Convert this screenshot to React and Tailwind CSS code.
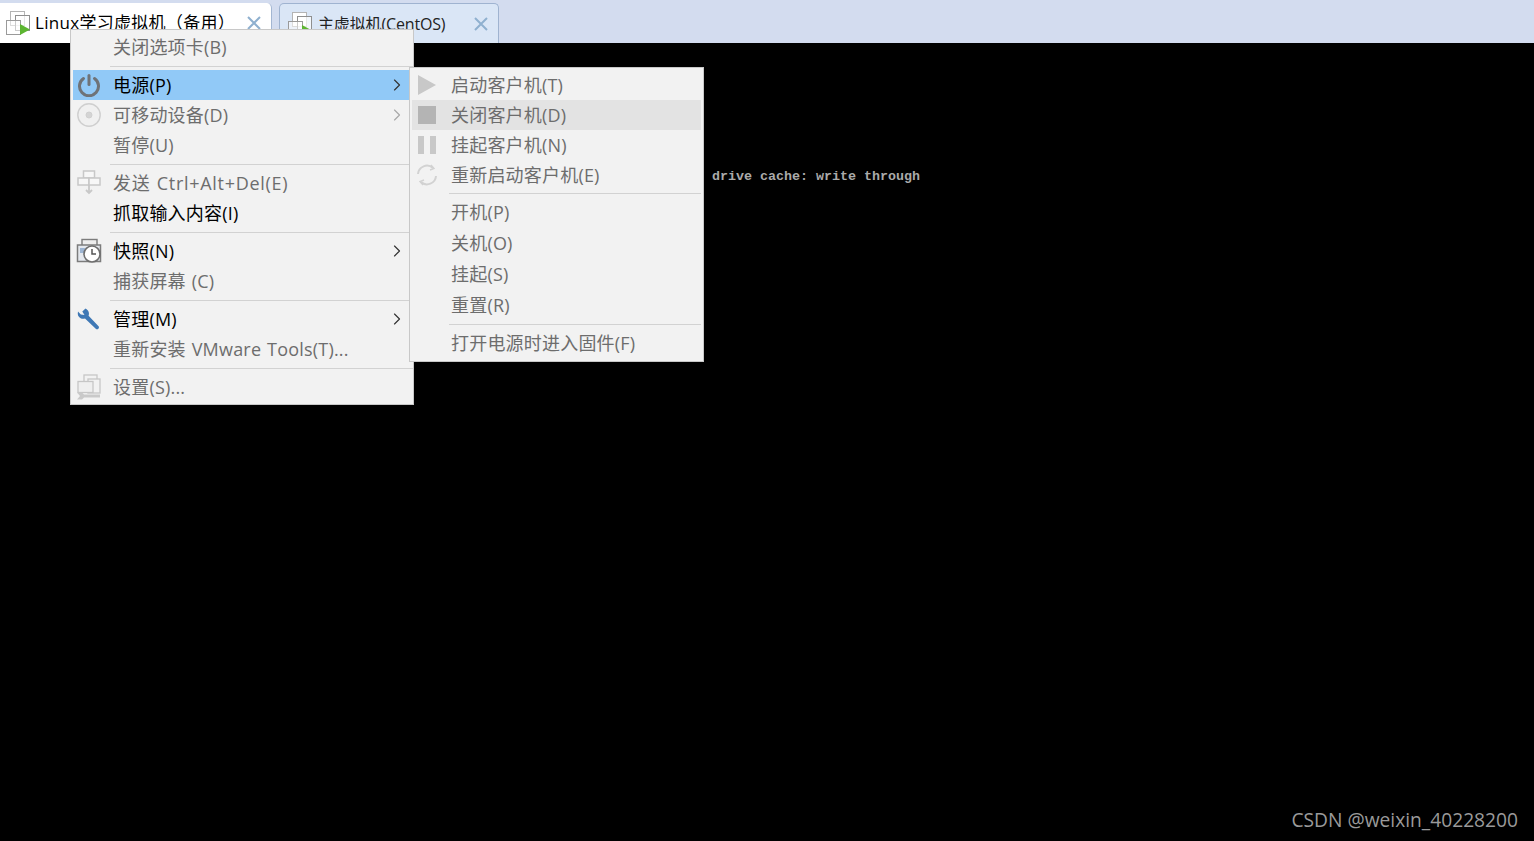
import { ChevronRight } from "lucide-react";

const cjk = "font-['Open_Sans','Noto_Sans_CJK_SC',sans-serif]";

function VmIcon() {
  return (
    <svg width="26" height="26" viewBox="0 0 26 26" fill="none" className="shrink-0">
      <rect x="4.5" y="1.5" width="14" height="14" fill="#fff" stroke="#b4b4b4" />
      <rect x="9.5" y="5.5" width="14" height="15" fill="#ffffffaa" stroke="#8f8f8f" />
      <rect x="0.5" y="10.5" width="14" height="14" fill="#ffffff88" stroke="#9a9a9a" />
      <path d="M14 14v11l10-5.5z" fill="#5cb531" />
    </svg>
  );
}

function PowerIcon() {
  return (
    <svg width="24" height="24" viewBox="0 0 24 24" fill="none" stroke="#6f7378" strokeWidth="3" strokeLinecap="round">
      <path d="M12 2.5v9" />
      <path d="M6.5 5.5a9.5 9.5 0 1 0 11 0" />
    </svg>
  );
}

function DiscIcon() {
  return (
    <svg width="24" height="24" viewBox="0 0 24 24" fill="#f0f0f0" stroke="#cfcfcf">
      <circle cx="12" cy="12" r="11.2" strokeWidth="1.4" />
      <circle cx="12" cy="12" r="3" fill="#d4d4d4" strokeWidth="1" />
    </svg>
  );
}

function SendKeysIcon() {
  return (
    <svg width="24" height="26" viewBox="0 0 24 26" fill="#f7f7f7" stroke="#c8c8c8" strokeWidth="1.5">
      <rect x="6.5" y="1" width="11" height="7" />
      <rect x="1" y="8" width="11" height="7" />
      <rect x="12" y="8" width="11" height="7" />
      <path d="M12 15v8M9 20l3 3 3-3" fill="none" strokeWidth="1.8" />
    </svg>
  );
}

function SnapshotIcon() {
  return (
    <svg width="26" height="26" viewBox="0 0 26 26" fill="none">
      <rect x="6" y="1.5" width="15" height="12" fill="#eee" stroke="#7c7c7c" strokeWidth="1.4" />
      <rect x="1.5" y="7" width="23" height="16.5" fill="#e4e8ee" stroke="#7c7c7c" strokeWidth="1.5" />
      <rect x="4" y="10" width="5" height="5" fill="#9db5d3" />
      <circle cx="16" cy="16" r="8" fill="#fff" stroke="#6e6e6e" strokeWidth="1.6" />
      <path d="M16 11v5h4" stroke="#555" strokeWidth="1.5" />
    </svg>
  );
}

function WrenchIcon() {
  return (
    <svg width="24" height="24" viewBox="0 0 24 24" fill="none">
      <path d="M8.5 1.5 5.3 4.6 7.5 8 3.8 7.4 1 4.6c-.7 3 .1 5.5 2.6 6.7 1.6.7 3.2.6 4.4.1L19 22c1.2 1.1 3.7-.7 2.8-2.6L11.6 8.7c.6-1.6.5-3.5-.5-5-.6-1-1.6-1.7-2.6-2.2z" fill="#3f78b5" />
    </svg>
  );
}

function SettingsIcon() {
  return (
    <svg width="26" height="26" viewBox="0 0 26 26" fill="none" stroke="#c6c6c6" strokeWidth="1.3">
      <rect x="8" y="1" width="13" height="13" fill="#f2f2f2" />
      <rect x="12" y="5" width="12" height="14" fill="#f2f2f2" />
      <rect x="2" y="7.5" width="15" height="11" fill="#efefef" />
      <path d="M1 18.5h5l2 2h16v3H8l-2 2H1l3-3.5z" fill="#c9c9c9" stroke="none" />
    </svg>
  );
}

function Divider({ height = "h-[8px]" }) {
  return (
    <div className={`ml-[37px] flex ${height} items-center`}>
      <div className="h-px w-full bg-[#d2d2d2]" />
    </div>
  );
}

function Row({ icon, label, disabled, active, arrow, spacing = "tracking-[0.2px]" }) {
  return (
    <div className={`flex h-[30px] items-center ${active ? "bg-[#91c9f7]" : ""}`}>
      <div className="flex w-[32px] shrink-0 items-center justify-center">{icon}</div>
      <span className={`ml-[8px] flex-1 whitespace-nowrap text-[18px] [word-spacing:1px] ${spacing} ${disabled ? "text-[#6d6d6d]" : "text-black"}`}>
        {label}
      </span>
      {arrow && (
        <ChevronRight
          size={20}
          strokeWidth={1.4}
          className={`mr-[6px] ${disabled ? "text-[#a8a8a8]" : "text-[#333]"}`}
        />
      )}
    </div>
  );
}

function MainMenu() {
  return (
    <div className={`absolute left-[70px] top-[29px] h-[376px] w-[344px] border border-[#c8c8c8] bg-[#f2f2f2] py-[2px] pl-[2px] ${cjk}`}>
      <Row label="关闭选项卡(B)" disabled />
      <Divider />
      <Row icon={<PowerIcon />} label="电源(P)" active arrow />
      <Row icon={<DiscIcon />} label="可移动设备(D)" disabled arrow />
      <Row label="暂停(U)" disabled />
      <Divider />
      <Row icon={<SendKeysIcon />} label="发送 Ctrl+Alt+Del(E)" disabled spacing="tracking-[0.7px]" />
      <Row label="抓取输入内容(I)" />
      <Divider />
      <Row icon={<SnapshotIcon />} label="快照(N)" arrow />
      <Row label="捕获屏幕 (C)" disabled />
      <Divider />
      <Row icon={<WrenchIcon />} label="管理(M)" arrow />
      <Row label="重新安装 VMware Tools(T)..." disabled />
      <Divider />
      <Row icon={<SettingsIcon />} label="设置(S)..." disabled />
    </div>
  );
}

function SubRow({ icon, label, active, height = "h-[30px]" }) {
  return (
    <div className={`flex ${height} items-center ${active ? "bg-[#e3e3e3]" : ""}`}>
      <div className="flex w-[30px] shrink-0 items-center justify-center">{icon}</div>
      <span className="ml-[9px] whitespace-nowrap text-[18px] tracking-[0.2px] text-[#6d6d6d]">{label}</span>
    </div>
  );
}

function PowerMenu() {
  return (
    <div className={`absolute left-[409px] top-[67px] h-[295px] w-[295px] border border-[#c8c8c8] bg-[#f2f2f2] px-[2px] py-[2px] ${cjk}`}>
      <SubRow
        label="启动客户机(T)"
        icon={<svg width="18" height="20" viewBox="0 0 18 20"><path d="M0 0l18 10L0 20z" fill="#c8c8c8" /></svg>}
      />
      <SubRow
        active
        label="关闭客户机(D)"
        icon={<div className="h-[18px] w-[18px] bg-[#b4b4b4]" />}
      />
      <SubRow
        label="挂起客户机(N)"
        icon={
          <div className="flex gap-[6px]">
            <div className="h-[18px] w-[6px] bg-[#c8c8c8]" />
            <div className="h-[18px] w-[6px] bg-[#c8c8c8]" />
          </div>
        }
      />
      <SubRow
        label="重新启动客户机(E)"
        icon={
          <svg width="22" height="22" viewBox="0 0 22 22" fill="none" stroke="#d2d2d2" strokeWidth="2">
            <path d="M2 10a9 9 0 0 1 15-6" />
            <path d="M20 12a9 9 0 0 1-15 6" />
            <path d="M15 1l3 3.5-4 1.5M7 21l-3-3.5 4-1.5" strokeWidth="1.4" />
          </svg>
        }
      />
      <Divider height="h-[7px]" />
      <SubRow height="h-[31px]" label="开机(P)" />
      <SubRow height="h-[31px]" label="关机(O)" />
      <SubRow height="h-[31px]" label="挂起(S)" />
      <SubRow height="h-[31px]" label="重置(R)" />
      <Divider height="h-[7px]" />
      <SubRow height="h-[31px]" label="打开电源时进入固件(F)" />
    </div>
  );
}

function CloseIcon() {
  return (
    <svg width="14" height="14" viewBox="0 0 14 14" stroke="#8fb0cf" strokeWidth="2" className="shrink-0">
      <path d="M1 1l12 12M13 1L1 13" />
    </svg>
  );
}

export default function App() {
  return (
    <div className="relative flex h-[841px] w-[1534px] flex-col overflow-hidden bg-black">
      <div className={`flex h-[43px] shrink-0 items-end gap-[7px] bg-[#d3dcef] pt-[3px] ${cjk}`}>
        <div className="flex h-[40px] w-[272px] items-center rounded-tr-[5px] border-r border-[#a3b6d2] bg-white pl-[6px] pr-[10px]">
          <VmIcon />
          <span className="ml-[3px] flex-1 whitespace-nowrap text-[17px] tracking-[0.3px] text-black">Linux学习虚拟机（备用）</span>
          <CloseIcon />
        </div>
        <div className="flex h-[40px] w-[220px] items-center rounded-t-[5px] border border-b-0 border-[#9fb3d0] bg-[#dae6f6] pl-[8px] pr-[10px]">
          <VmIcon />
          <span className="ml-[4px] flex-1 whitespace-nowrap text-[16px] tracking-[-0.15px] text-[#222]">主虚拟机(CentOS)</span>
          <CloseIcon />
        </div>
      </div>

      <div className="flex-1 pl-[712px] pt-[126px]">
        <div className="font-['Liberation_Mono',monospace] text-[13.33px] font-bold leading-[16px] text-[#aaaaaa]">
          drive cache: write through
        </div>
      </div>

      <MainMenu />
      <PowerMenu />

      <div className="absolute bottom-[7px] right-[16px] font-['Open_Sans',sans-serif] text-[19.2px] leading-[28px] text-[#9a9a9a]">
        CSDN @weixin_40228200
      </div>
    </div>
  );
}
